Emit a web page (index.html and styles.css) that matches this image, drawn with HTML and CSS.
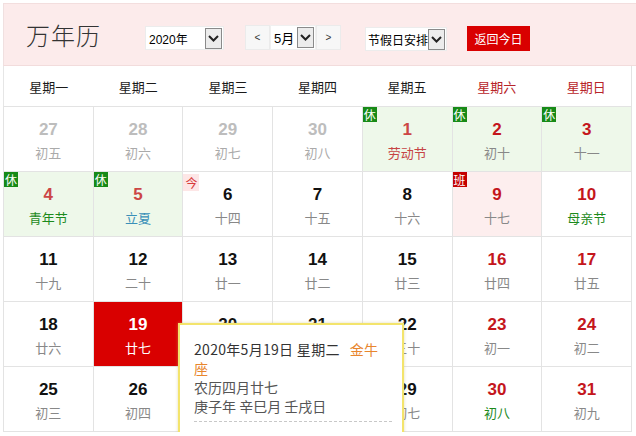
FILE: index.html
```html
<!DOCTYPE html>
<html lang="zh-CN">
<head>
<meta charset="utf-8">
<title>万年历</title>
<link rel="stylesheet" href="styles.css">
</head>
<body>
<div class="cal">
  <div class="head">
    <div class="title">万年历</div>
    <div class="sel sel-year"><span class="sel-text">2020年</span><span class="arrow"><svg width="11" height="7" viewBox="0 0 11 7"><path d="M1 1 L5.5 5.5 L10 1" fill="none" stroke="#222" stroke-width="2"/></svg></span></div>
    <div class="month-group">
      <span class="step">&lt;</span>
      <div class="sel sel-month"><span class="sel-text">5月</span><span class="arrow"><svg width="11" height="7" viewBox="0 0 11 7"><path d="M1 1 L5.5 5.5 L10 1" fill="none" stroke="#222" stroke-width="2"/></svg></span></div>
      <span class="step">&gt;</span>
    </div>
    <div class="sel sel-hol"><span class="sel-text">节假日安排</span><span class="arrow"><svg width="11" height="7" viewBox="0 0 11 7"><path d="M1 1 L5.5 5.5 L10 1" fill="none" stroke="#222" stroke-width="2"/></svg></span></div>
    <div class="btn-today">返回今日</div>
  </div>

  <div class="weekdays">
    <div>星期一</div><div>星期二</div><div>星期三</div><div>星期四</div><div>星期五</div><div class="we">星期六</div><div class="we">星期日</div>
  </div>

  <div class="days">
    <div class="cell other"><span class="num">27</span><span class="lun">初五</span></div>
    <div class="cell other"><span class="num">28</span><span class="lun">初六</span></div>
    <div class="cell other"><span class="num">29</span><span class="lun">初七</span></div>
    <div class="cell other"><span class="num">30</span><span class="lun">初八</span></div>
    <div class="cell hol"><span class="badge rest">休</span><span class="num red-l">1</span><span class="lun fest-red">劳动节</span></div>
    <div class="cell hol"><span class="badge rest">休</span><span class="num red">2</span><span class="lun">初十</span></div>
    <div class="cell hol"><span class="badge rest">休</span><span class="num red">3</span><span class="lun">十一</span></div>

    <div class="cell hol"><span class="badge rest">休</span><span class="num red-l">4</span><span class="lun green">青年节</span></div>
    <div class="cell hol"><span class="badge rest">休</span><span class="num red-l">5</span><span class="lun term">立夏</span></div>
    <div class="cell"><span class="badge jin">今</span><span class="num">6</span><span class="lun">十四</span></div>
    <div class="cell"><span class="num">7</span><span class="lun">十五</span></div>
    <div class="cell"><span class="num">8</span><span class="lun">十六</span></div>
    <div class="cell work"><span class="badge ban">班</span><span class="num red">9</span><span class="lun">十七</span></div>
    <div class="cell"><span class="num red">10</span><span class="lun green">母亲节</span></div>

    <div class="cell"><span class="num">11</span><span class="lun">十九</span></div>
    <div class="cell"><span class="num">12</span><span class="lun">二十</span></div>
    <div class="cell"><span class="num">13</span><span class="lun">廿一</span></div>
    <div class="cell"><span class="num">14</span><span class="lun">廿二</span></div>
    <div class="cell"><span class="num">15</span><span class="lun">廿三</span></div>
    <div class="cell"><span class="num red">16</span><span class="lun">廿四</span></div>
    <div class="cell"><span class="num red">17</span><span class="lun">廿五</span></div>

    <div class="cell"><span class="num">18</span><span class="lun">廿六</span></div>
    <div class="cell today"><span class="num">19</span><span class="lun">廿七</span></div>
    <div class="cell"><span class="num">20</span><span class="lun">廿八</span></div>
    <div class="cell"><span class="num">21</span><span class="lun">廿九</span></div>
    <div class="cell"><span class="num">22</span><span class="lun">三十</span></div>
    <div class="cell"><span class="num red">23</span><span class="lun">初一</span></div>
    <div class="cell"><span class="num red">24</span><span class="lun">初二</span></div>

    <div class="cell"><span class="num">25</span><span class="lun">初三</span></div>
    <div class="cell"><span class="num">26</span><span class="lun">初四</span></div>
    <div class="cell"><span class="num">27</span><span class="lun">初五</span></div>
    <div class="cell"><span class="num">28</span><span class="lun">初六</span></div>
    <div class="cell"><span class="num">29</span><span class="lun">初七</span></div>
    <div class="cell"><span class="num red">30</span><span class="lun green">初八</span></div>
    <div class="cell"><span class="num red">31</span><span class="lun">初九</span></div>
  </div>

  <div class="tip">
    <div class="tip-line tip-date">2020年5月19日 星期二<span class="star">金牛座</span></div>
    <div class="tip-line tip-gray">农历四月廿七</div>
    <div class="tip-line tip-gray">庚子年 辛巳月 壬戌日</div>
    <div class="tip-sep"></div>
  </div>
</div>
</body>
</html>
```

FILE: styles.css
```css
* { box-sizing: border-box; }
html, body { margin: 0; padding: 0; background: #fff; }
body {
  font-family: "Liberation Sans", "Noto Sans CJK SC", sans-serif;
  overflow: hidden;
}
.cal {
  position: relative;
  margin: 3px 0 0 3px;
  width: 629px;
}
.head {
  display: flex;
  align-items: flex-start;
  height: 63px;
  width: 640px;
  background: #fcebeb;
  border-top: 1px solid #f3dede;
  border-left: 1px solid #f0e0e0;
  border-bottom: 1px solid #f2dcdc;
}
.title {
  margin: 18px 0 0 22px;
  font-family: "Noto Sans CJK SC", serif;
  font-size: 24px;
  line-height: 26px;
  color: #333;
  font-weight: 300;
  letter-spacing: 1px;
}
.sel {
  display: flex;
  align-items: center;
  height: 24px;
  background: #fff;
  border: 1px solid #ececec;
  font-size: 12px;
  color: #000;
}
.sel-text {
  flex: 1;
  padding-left: 3px;
  font-family: "Liberation Sans", "Noto Sans CJK SC", sans-serif;
}
.arrow {
  display: flex;
  align-items: center;
  justify-content: center;
  width: 17px;
  height: 21px;
  margin-right: 1px;
  background: #ececec;
  border: 1px solid #8a8a8a;
}
.sel-year { width: 79px; margin: 22px 0 0 44px; }
.month-group {
  display: flex;
  margin: 21px 0 0 21px;
  height: 25px;
}
.step {
  width: 25px;
  height: 25px;
  display: flex;
  align-items: center;
  justify-content: center;
  background: #f7f7f7;
  border: 1px solid #ebebeb;
  font-size: 10px;
  color: #333;
}
.sel-month { width: 46px; height: 25px; border-color: #f0f0f0; }
.sel-month .sel-text { font-size: 13px; }
.sel-hol { width: 82px; margin: 23px 0 0 24px; }
.sel-hol .sel-text { padding-left: 2px; font-size: 12px; letter-spacing: 0; }
.btn-today {
  margin: 22px 0 0 20px;
  width: 63px;
  height: 25px;
  background: #d90000;
  color: #fff;
  font-family: "Noto Sans CJK SC", sans-serif;
  font-size: 12px;
  line-height: 25px;
  text-align: center;
}

.weekdays {
  display: grid;
  grid-template-columns: repeat(7, 1fr);
  height: 41px;
  border-left: 1px solid #e6e6e6;
  border-right: 1px solid #e3e3e3;
  border-bottom: 1px solid #e3e3e3;
  font-family: "Noto Sans CJK SC", sans-serif;
  font-size: 13px;
  color: #1a1a1a;
}
.weekdays div {
  display: flex;
  align-items: center;
  justify-content: center;
  padding-top: 1px;
}
.weekdays .we { color: #b8252a; }

.days {
  display: grid;
  grid-template-columns: repeat(7, 1fr);
  grid-auto-rows: 65px;
  border-left: 1px solid #e3e3e3;
}
.cell {
  position: relative;
  display: flex;
  flex-direction: column;
  align-items: center;
  padding-top: 13px;
  border-right: 1px solid #e3e3e3;
  border-bottom: 1px solid #e3e3e3;
}
.num {
  font-family: "Liberation Sans", sans-serif;
  font-weight: bold;
  font-size: 17px;
  line-height: 20px;
  color: #111;
}
.lun {
  margin-top: 3px;
  font-family: "Noto Sans CJK SC", sans-serif;
  font-size: 13px;
  line-height: 20px;
  color: #888;
}
.other .num { color: #bdbdbd; }
.other .lun { color: #aaa; }
.num.red { color: #c4161c; }
.num.red-l { color: #cc4646; }
.lun.fest-red { color: #c64444; }
.lun.green { color: #1c8a1c; }
.lun.term { color: #3a90b8; }
.hol { background: #eef8ea; }
.work { background: #fdeeee; }
.today { background: #d90000; }
.today .num, .today .lun { color: #fff; }

.badge {
  position: absolute;
  top: 0;
  left: 0;
  width: 14px;
  height: 15px;
  font-family: "Noto Sans CJK SC", sans-serif;
  font-size: 12px;
  line-height: 15px;
  text-align: center;
  color: #fff;
}
.badge.rest { background: #178a17; }
.badge.ban { background: #c40000; }
.badge.jin {
  top: 2px;
  width: 16px;
  height: 17px;
  line-height: 17px;
  background: #fde6e6;
  color: #d83a3a;
}

.tip {
  position: absolute;
  left: 175px;
  top: 320px;
  width: 226px;
  height: 130px;
  padding: 15px 12px 0 14px;
  background: #fff;
  border: 2px solid #f3e46c;
  box-shadow: 0 0 3px rgba(200, 190, 120, 0.5);
  font-family: "Noto Sans CJK SC", sans-serif;
  font-size: 14px;
  line-height: 19px;
  color: #333;
}
.tip-date { width: 192px; letter-spacing: 0.3px; }
.star { color: #e8862e; margin-left: 10px; }
.tip-gray { color: #555; }
.tip-sep {
  margin-top: 5px;
  width: 198px;
  border-top: 1px dashed #c8c8c8;
}
```
